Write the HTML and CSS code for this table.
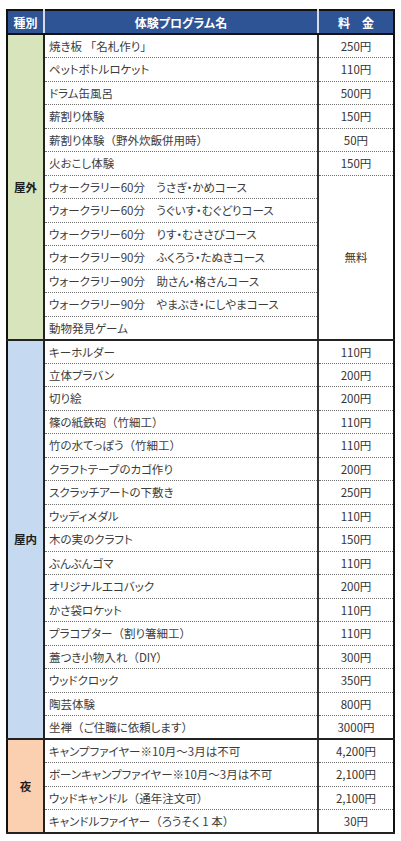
FILE: index.html
```html
<!DOCTYPE html>
<html lang="ja">
<head>
<meta charset="utf-8">
<title>体験プログラム</title>
<link rel="stylesheet" href="styles.css">
</head>
<body>
<div class="wrap">
<table class="tbl">
<colgroup><col class="c1"><col class="c2"><col class="c3"></colgroup>
<thead>
<tr><th class="h1">種別</th><th class="h2">体験プログラム名</th><th class="h3">料　金</th></tr>
</thead>
<tbody class="out">
<tr><td class="cat green" rowspan="13">屋外</td><td class="nm">焼き板 <span class="fw">「</span>名札作り<span class="fw">」</span></td><td class="pr">250円</td></tr>
<tr><td class="nm">ペットボトルロケット</td><td class="pr">110円</td></tr>
<tr><td class="nm">ドラム缶風呂</td><td class="pr">500円</td></tr>
<tr><td class="nm">薪割り体験</td><td class="pr">150円</td></tr>
<tr><td class="nm">薪割り体験<span class="fw">（</span>野外炊飯併用時<span class="fw">）</span></td><td class="pr">50円</td></tr>
<tr><td class="nm">火おこし体験</td><td class="pr">150円</td></tr>
<tr><td class="nm">ウォークラリー60分　うさぎ・かめコース</td><td class="pr last" rowspan="7">無料</td></tr>
<tr><td class="nm">ウォークラリー60分　うぐいす・むぐどりコース</td></tr>
<tr><td class="nm">ウォークラリー60分　りす・むささびコース</td></tr>
<tr><td class="nm">ウォークラリー90分　ふくろう・たぬきコース</td></tr>
<tr><td class="nm">ウォークラリー90分　助さん・格さんコース</td></tr>
<tr><td class="nm">ウォークラリー90分　やまぶき・にしやまコース</td></tr>
<tr class="end"><td class="nm">動物発見ゲーム</td></tr>
</tbody>
<tbody class="in">
<tr><td class="cat blue" rowspan="17">屋内</td><td class="nm">キーホルダー</td><td class="pr">110円</td></tr>
<tr><td class="nm">立体プラバン</td><td class="pr">200円</td></tr>
<tr><td class="nm">切り絵</td><td class="pr">200円</td></tr>
<tr><td class="nm">篠の紙鉄砲<span class="fw">（</span>竹細工<span class="fw">）</span></td><td class="pr">110円</td></tr>
<tr><td class="nm">竹の水てっぽう<span class="fw">（</span>竹細工<span class="fw">）</span></td><td class="pr">110円</td></tr>
<tr><td class="nm">クラフトテープのカゴ作り</td><td class="pr">200円</td></tr>
<tr><td class="nm">スクラッチアートの下敷き</td><td class="pr">250円</td></tr>
<tr><td class="nm">ウッディメダル</td><td class="pr">110円</td></tr>
<tr><td class="nm">木の実のクラフト</td><td class="pr">150円</td></tr>
<tr><td class="nm">ぶんぶんゴマ</td><td class="pr">110円</td></tr>
<tr><td class="nm">オリジナルエコバック</td><td class="pr">200円</td></tr>
<tr><td class="nm">かさ袋ロケット</td><td class="pr">110円</td></tr>
<tr><td class="nm">プラコプター<span class="fw">（</span>割り箸細工<span class="fw">）</span></td><td class="pr">110円</td></tr>
<tr><td class="nm">蓋つき小物入れ<span class="fw">（</span>DIY<span class="fw">）</span></td><td class="pr">300円</td></tr>
<tr><td class="nm">ウッドクロック</td><td class="pr">350円</td></tr>
<tr><td class="nm">陶芸体験</td><td class="pr">800円</td></tr>
<tr class="end"><td class="nm">坐禅<span class="fw">（</span>ご住職に依頼します<span class="fw">）</span></td><td class="pr">3000円</td></tr>
</tbody>
<tbody class="night">
<tr><td class="cat peach" rowspan="4">夜</td><td class="nm">キャンプファイヤー※10月～3月は不可</td><td class="pr">4,200円</td></tr>
<tr><td class="nm">ボーンキャンプファイヤー※10月～3月は不可</td><td class="pr">2,100円</td></tr>
<tr><td class="nm">ウッドキャンドル<span class="fw">（</span>通年注文可<span class="fw">）</span></td><td class="pr">2,100円</td></tr>
<tr class="end"><td class="nm">キャンドルファイヤー<span class="fw">（</span>ろうそく 1 本<span class="fw">）</span></td><td class="pr">30円</td></tr>
</tbody>
</table>
</div>
</body>
</html>
```
FILE: styles.css
```css
html, body {
  margin: 0;
  padding: 0;
  background: #ffffff;
}
.wrap {
  padding: 9px 0 0 6px;
}
.tbl {
  border-collapse: collapse;
  table-layout: fixed;
  width: 387px;
  border: 2px solid #111;
  font-family: "Noto Sans CJK JP", "Noto Sans", sans-serif;
  font-size: 11.5px;
  color: #3c3c3c;
  font-feature-settings: "palt";
}
.fw {
  font-feature-settings: normal;
}
.c1 { width: 37px; }
.c2 { width: 274px; }
.c3 { width: 76px; }
thead tr { height: 24px; }
th {
  background: #2f5496;
  color: #ffffff;
  font-weight: bold;
  font-size: 12px;
  padding: 0;
  text-align: center;
  border-bottom: 2px solid #111;
}
.h1 { border-right: 2px solid #d6dbe6; }
.h2 { border-right: 2px solid #d6dbe6; }
tbody tr { height: 23.5px; }
td {
  padding: 0;
  line-height: 14px;
}
.cat {
  text-align: center;
  font-weight: bold;
  font-size: 11.5px;
  color: #1e1e1e;
  border-right: 2px solid #222;
  border-bottom: 2px solid #222;
}
.green { background: #d8e4bc; }
.blue { background: #c5d9f1; }
.peach { background: #fbd0b0; }
.nm {
  padding-left: 4px;
  white-space: nowrap;
  border-right: 2px solid #333;
  border-bottom: 1px dotted #707070;
}
.pr {
  text-align: center;
  font-size: 11.5px;
  border-bottom: 1px dotted #707070;
  color: #333;
}
.end td { border-bottom: 2px solid #222; }
.pr.last { border-bottom: 2px solid #222; }
```
